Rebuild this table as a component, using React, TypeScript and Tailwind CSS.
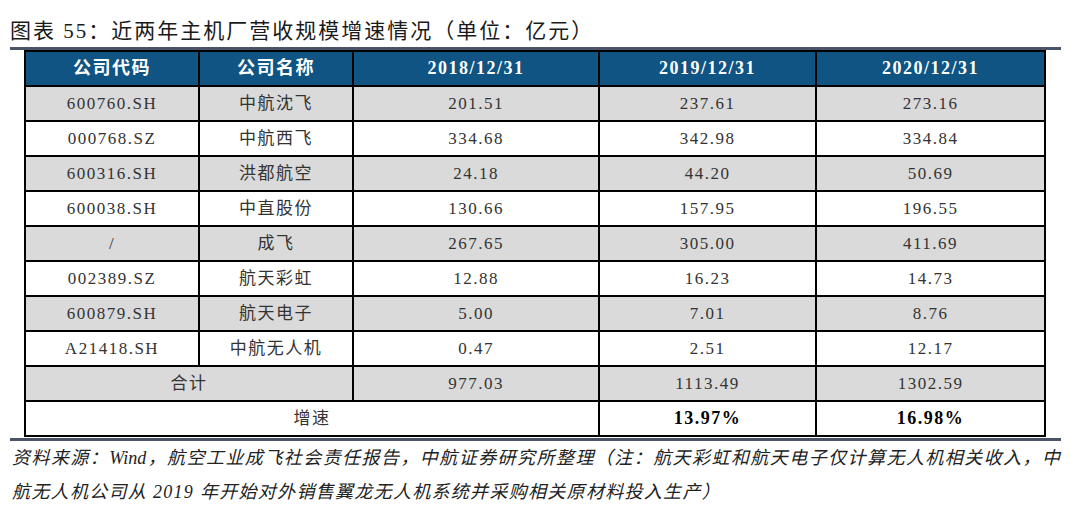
const rows = [
  { code: "600760.SH", name: "中航沈飞", a: "201.51", b: "237.61", c: "273.16" },
  { code: "000768.SZ", name: "中航西飞", a: "334.68", b: "342.98", c: "334.84" },
  { code: "600316.SH", name: "洪都航空", a: "24.18", b: "44.20", c: "50.69" },
  { code: "600038.SH", name: "中直股份", a: "130.66", b: "157.95", c: "196.55" },
  { code: "/", name: "成飞", a: "267.65", b: "305.00", c: "411.69" },
  { code: "002389.SZ", name: "航天彩虹", a: "12.88", b: "16.23", c: "14.73" },
  { code: "600879.SH", name: "航天电子", a: "5.00", b: "7.01", c: "8.76" },
  { code: "A21418.SH", name: "中航无人机", a: "0.47", b: "2.51", c: "12.17" },
];

const cell = "border-2 border-black text-center align-middle p-0";

export default function App() {
  return (
    <div
      className="w-[1080px] h-[518px] bg-white overflow-hidden flex flex-col text-[#222]"
      style={{ fontFamily: '"Liberation Serif", "Noto Sans CJK SC", serif' }}
    >
      {/* title */}
      <div className="pl-[10px] pt-[19px] text-[21px] leading-[24px] tracking-[2px] text-[#1a1a1a]">
        图表 55：近两年主机厂营收规模增速情况（单位：亿元）
      </div>
      <div className="ml-[10px] mt-[4px] w-[1051px] h-[3px] bg-[#4a5466]" />

      <div className="ml-[24px] w-[1022px]">
        <table className="w-full table-fixed border-collapse text-[17px] tracking-[1.5px]">
          <colgroup>
            <col className="w-[174px]" />
            <col className="w-[154px]" />
            <col className="w-[246px]" />
            <col className="w-[217px]" />
            <col />
          </colgroup>
          <thead>
            <tr className="h-[35px] bg-[#0f5482] text-white font-bold text-[18px]">
              <th className={cell}>公司代码</th>
              <th className={cell}>公司名称</th>
              <th className={`${cell} tracking-[1.5px]`}>2018/12/31</th>
              <th className={`${cell} tracking-[1.5px]`}>2019/12/31</th>
              <th className={`${cell} tracking-[1.5px]`}>2020/12/31</th>
            </tr>
          </thead>
          <tbody className="text-[#333]">
            {rows.map((r, i) => (
              <tr key={r.code + r.name} className={`h-[35px] ${i % 2 === 0 ? "bg-[#dadada]" : "bg-white"}`}>
                <td className={cell}>{r.code}</td>
                <td className={cell}>{r.name}</td>
                <td className={cell}>{r.a}</td>
                <td className={cell}>{r.b}</td>
                <td className={cell}>{r.c}</td>
              </tr>
            ))}
            <tr className="h-[35px] bg-[#dadada]">
              <td className={cell} colSpan={2}>合计</td>
              <td className={cell}>977.03</td>
              <td className={cell}>1113.49</td>
              <td className={cell}>1302.59</td>
            </tr>
            <tr className="h-[35px] bg-white">
              <td className={cell} colSpan={3}>增速</td>
              <td className={`${cell} font-bold text-black text-[18px]`}>13.97%</td>
              <td className={`${cell} font-bold text-black text-[18px]`}>16.98%</td>
            </tr>
          </tbody>
        </table>
      </div>
      <div className="ml-[10px] mt-[1px] w-[1051px] h-[3px] bg-[#4a5466]" />

      {/* source note */}
      <div className="pl-[12px] w-[1060px] italic text-[18px] leading-[34px] text-[#222]">
        <div className="text-justify [text-align-last:justify]">
          资料来源：Wind，航空工业成飞社会责任报告，中航证券研究所整理（注：航天彩虹和航天电子仅计算无人机相关收入，中
        </div>
        <div className="tracking-[1.3px]">
          航无人机公司从 2019 年开始对外销售翼龙无人机系统并采购相关原材料投入生产）
        </div>
      </div>
    </div>
  );
}
